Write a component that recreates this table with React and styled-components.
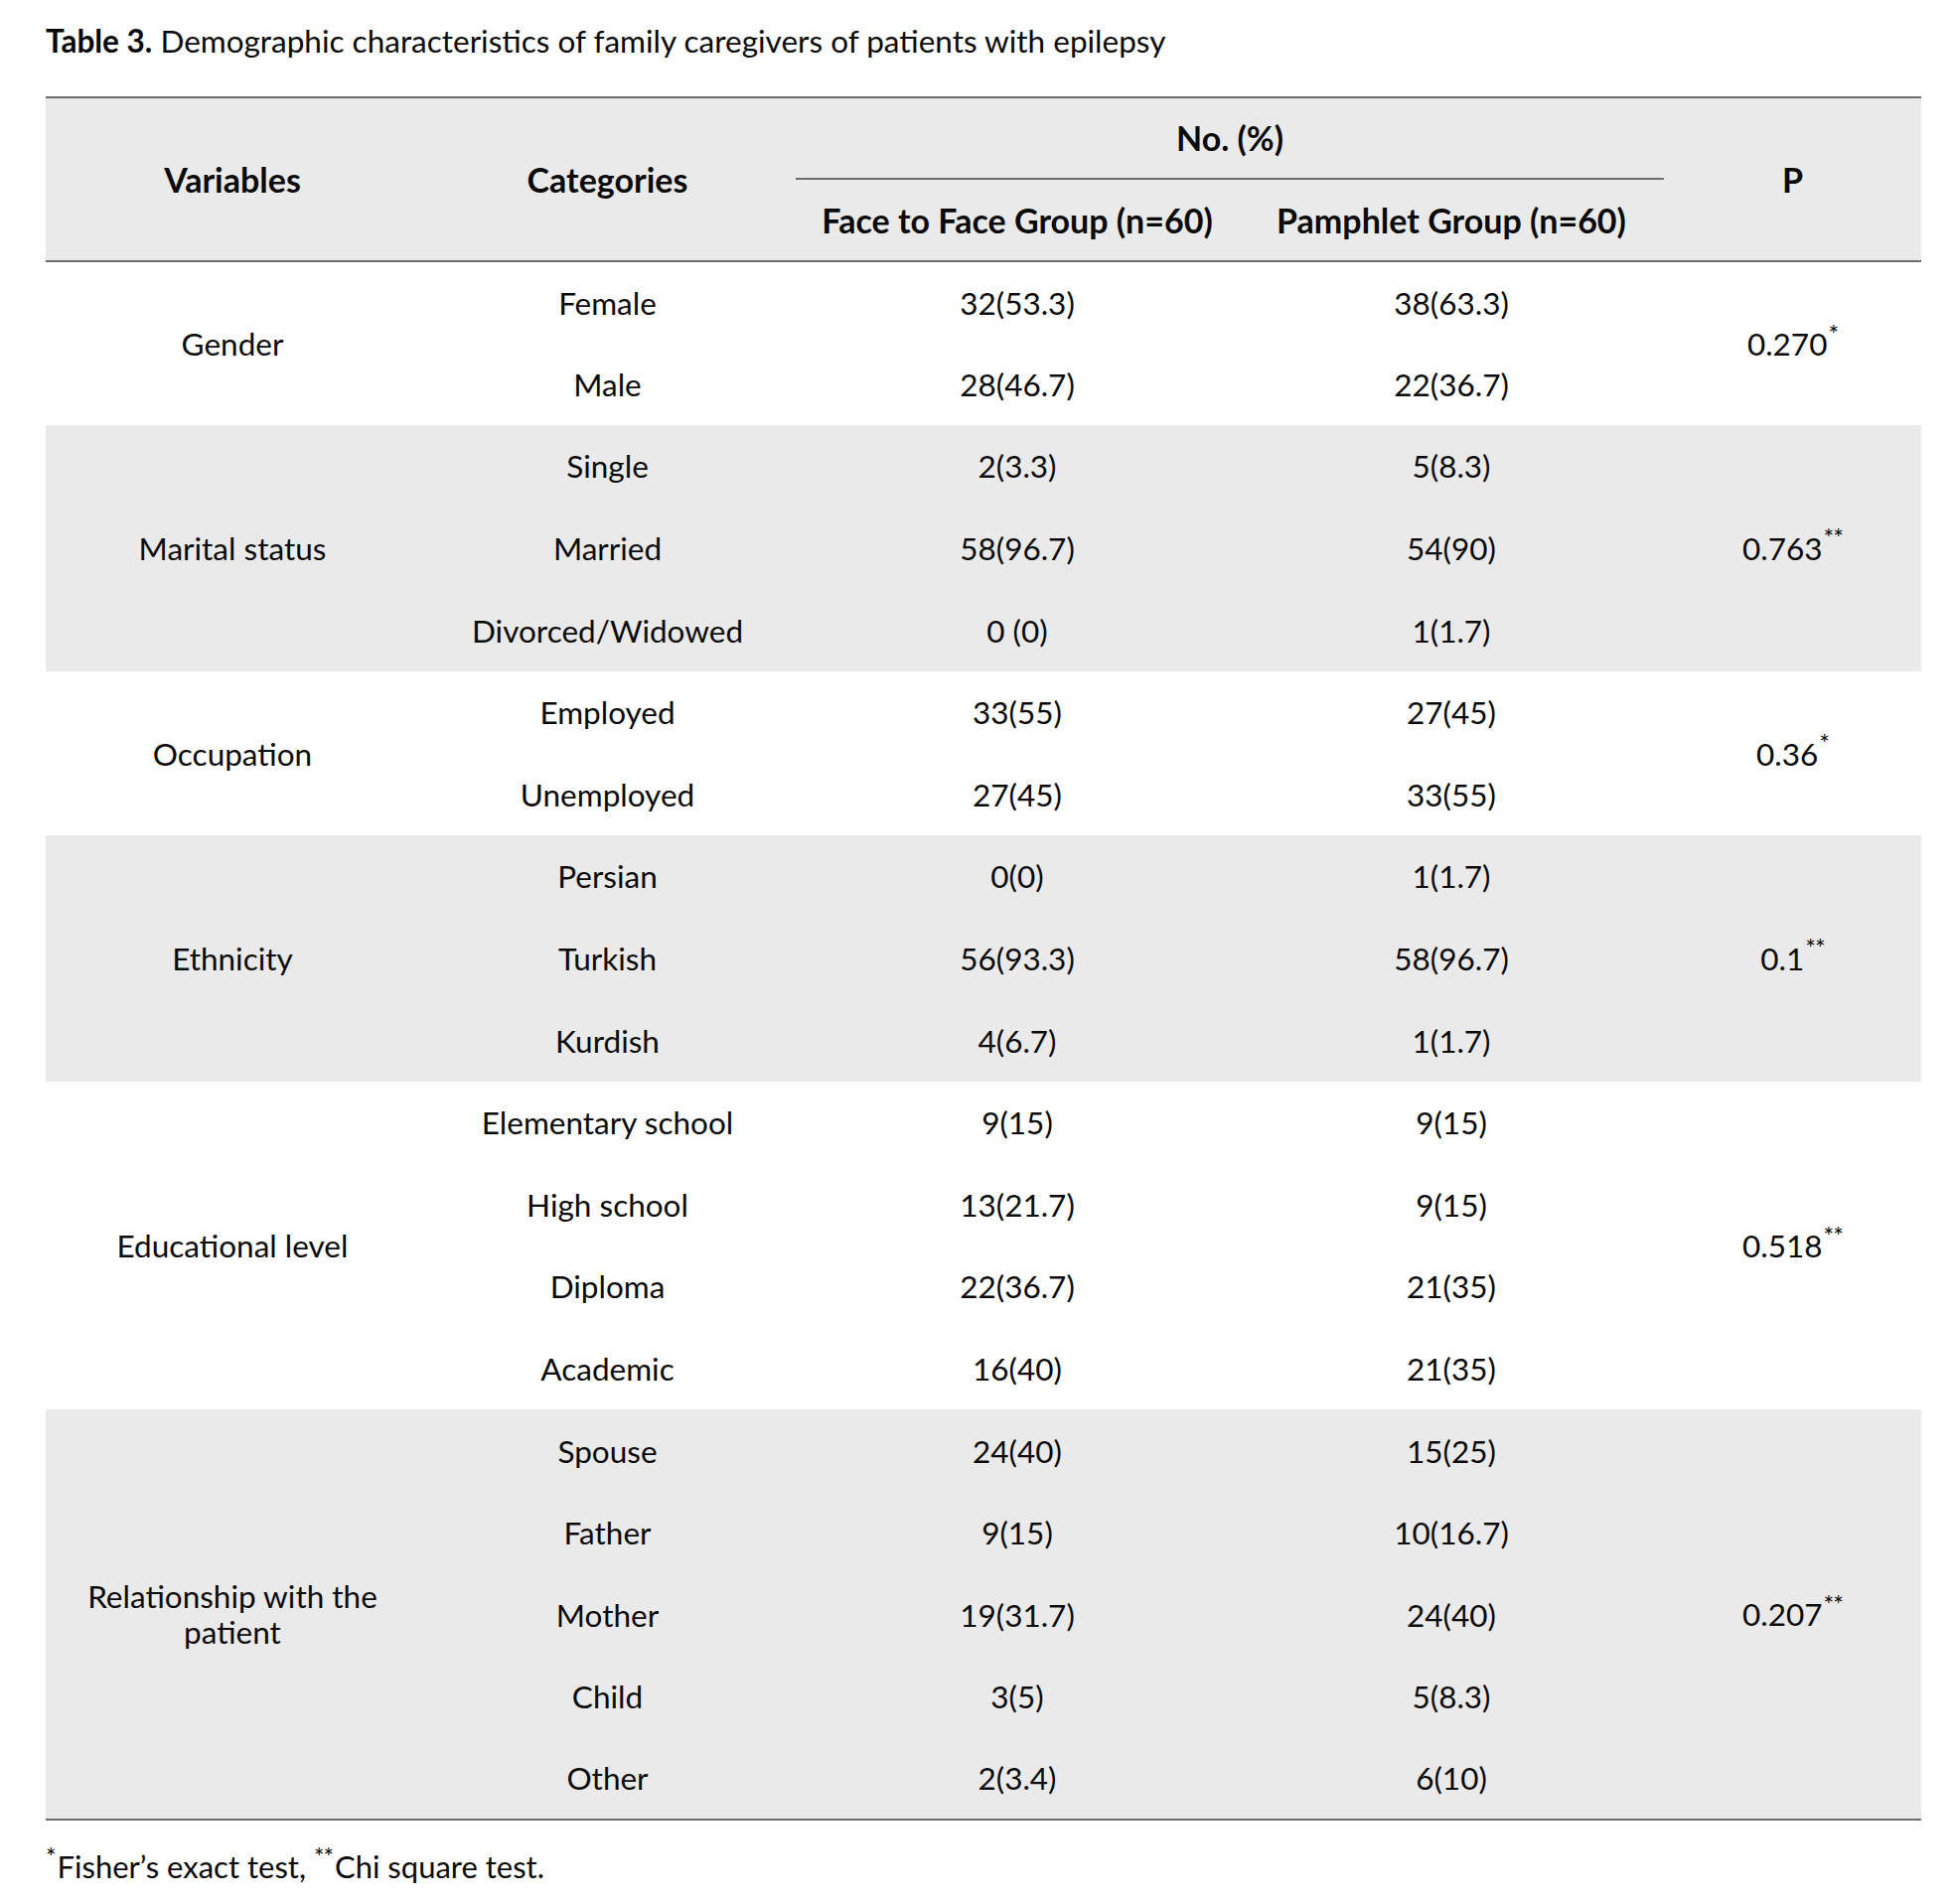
import styled, { createGlobalStyle } from 'styled-components';

const GlobalStyle = createGlobalStyle`
  html, body {
    margin: 0;
    padding: 0;
    background: #ffffff;
  }
  body {
    font-family: Lato, "Open Sans", "Liberation Sans", sans-serif;
    color: #0a0a0a;
  }
`;

const Page = styled.div`
  width: 1967px;
  min-height: 1917px;
  padding: 22px 33px 0 46px;
  box-sizing: border-box;
`;

const Caption = styled.div`
  font-size: 31.5px;
  line-height: 38px;
  margin-bottom: 37px;
  b {
    font-weight: 700;
  }
`;

const Table = styled.table`
  width: 1888px;
  table-layout: fixed;
  border-collapse: collapse;
  border-top: 2px solid #6d6d6d;
  border-bottom: 2px solid #6d6d6d;
`;

const Head = styled.thead`
  background: #eaeaea;
  border-bottom: 2px solid #6d6d6d;
`;

const HeadCell = styled.th`
  font-weight: 700;
  font-size: 34px;
  line-height: 40px;
  text-align: center;
  vertical-align: middle;
  padding: 0;
  height: ${p => p.$h || 80}px;
  border-bottom: ${p => (p.$rule ? '2px solid #6d6d6d' : 'none')};
`;

const Group = styled.tbody`
  background: ${p => (p.$shade ? '#eaeaea' : '#ffffff')};
`;

const Row = styled.tr`
  height: 82.6px;
`;

const Cell = styled.td`
  font-size: 31.5px;
  line-height: 36px;
  text-align: center;
  vertical-align: middle;
  padding: 0 6px;
`;

const Star = styled.sup`
  font-size: 0.8em;
  line-height: 0;
  vertical-align: 0.5em;
  letter-spacing: -1px;
  margin-left: 1px;
`;

const Note = styled.div`
  font-size: 31px;
  line-height: 36px;
  margin-top: 28px;
  ${Star} {
    margin-left: 0;
    margin-right: 2px;
  }
`;

const groups = [
  {
    name: 'Gender',
    p: '0.270',
    star: '*',
    rows: [
      ['Female', '32(53.3)', '38(63.3)'],
      ['Male', '28(46.7)', '22(36.7)'],
    ],
  },
  {
    name: 'Marital status',
    p: '0.763',
    star: '**',
    shade: true,
    rows: [
      ['Single', '2(3.3)', '5(8.3)'],
      ['Married', '58(96.7)', '54(90)'],
      ['Divorced/Widowed', '0 (0)', '1(1.7)'],
    ],
  },
  {
    name: 'Occupation',
    p: '0.36',
    star: '*',
    rows: [
      ['Employed', '33(55)', '27(45)'],
      ['Unemployed', '27(45)', '33(55)'],
    ],
  },
  {
    name: 'Ethnicity',
    p: '0.1',
    star: '**',
    shade: true,
    rows: [
      ['Persian', '0(0)', '1(1.7)'],
      ['Turkish', '56(93.3)', '58(96.7)'],
      ['Kurdish', '4(6.7)', '1(1.7)'],
    ],
  },
  {
    name: 'Educational level',
    p: '0.518',
    star: '**',
    rows: [
      ['Elementary school', '9(15)', '9(15)'],
      ['High school', '13(21.7)', '9(15)'],
      ['Diploma', '22(36.7)', '21(35)'],
      ['Academic', '16(40)', '21(35)'],
    ],
  },
  {
    name: (
      <>
        Relationship with the
        <br />
        patient
      </>
    ),
    p: '0.207',
    star: '**',
    shade: true,
    rows: [
      ['Spouse', '24(40)', '15(25)'],
      ['Father', '9(15)', '10(16.7)'],
      ['Mother', '19(31.7)', '24(40)'],
      ['Child', '3(5)', '5(8.3)'],
      ['Other', '2(3.4)', '6(10)'],
    ],
  },
];

export default function App() {
  return (
    <Page>
      <GlobalStyle />
      <Caption>
        <b>Table 3.</b> Demographic characteristics of family caregivers of patients with epilepsy
      </Caption>
      <Table>
        <colgroup>
          <col style={{ width: 376 }} />
          <col style={{ width: 379 }} />
          <col style={{ width: 446 }} />
          <col style={{ width: 428 }} />
          <col style={{ width: 259 }} />
        </colgroup>
        <Head>
          <tr>
            <HeadCell rowSpan={2}>Variables</HeadCell>
            <HeadCell rowSpan={2}>Categories</HeadCell>
            <HeadCell colSpan={2} $rule $h={80}>
              No. (%)
            </HeadCell>
            <HeadCell rowSpan={2}>P</HeadCell>
          </tr>
          <tr>
            <HeadCell $h={81}>Face to Face Group (n=60)</HeadCell>
            <HeadCell $h={81}>Pamphlet Group (n=60)</HeadCell>
          </tr>
        </Head>
        {groups.map((g, gi) => (
          <Group key={gi} $shade={g.shade}>
            {g.rows.map((r, ri) => (
              <Row key={ri}>
                {ri === 0 && <Cell rowSpan={g.rows.length}>{g.name}</Cell>}
                <Cell>{r[0]}</Cell>
                <Cell>{r[1]}</Cell>
                <Cell>{r[2]}</Cell>
                {ri === 0 && (
                  <Cell rowSpan={g.rows.length}>
                    {g.p}
                    <Star>{g.star}</Star>
                  </Cell>
                )}
              </Row>
            ))}
          </Group>
        ))}
      </Table>
      <Note>
        <Star>*</Star>Fisher’s exact test, <Star>**</Star>Chi square test.
      </Note>
    </Page>
  );
}
